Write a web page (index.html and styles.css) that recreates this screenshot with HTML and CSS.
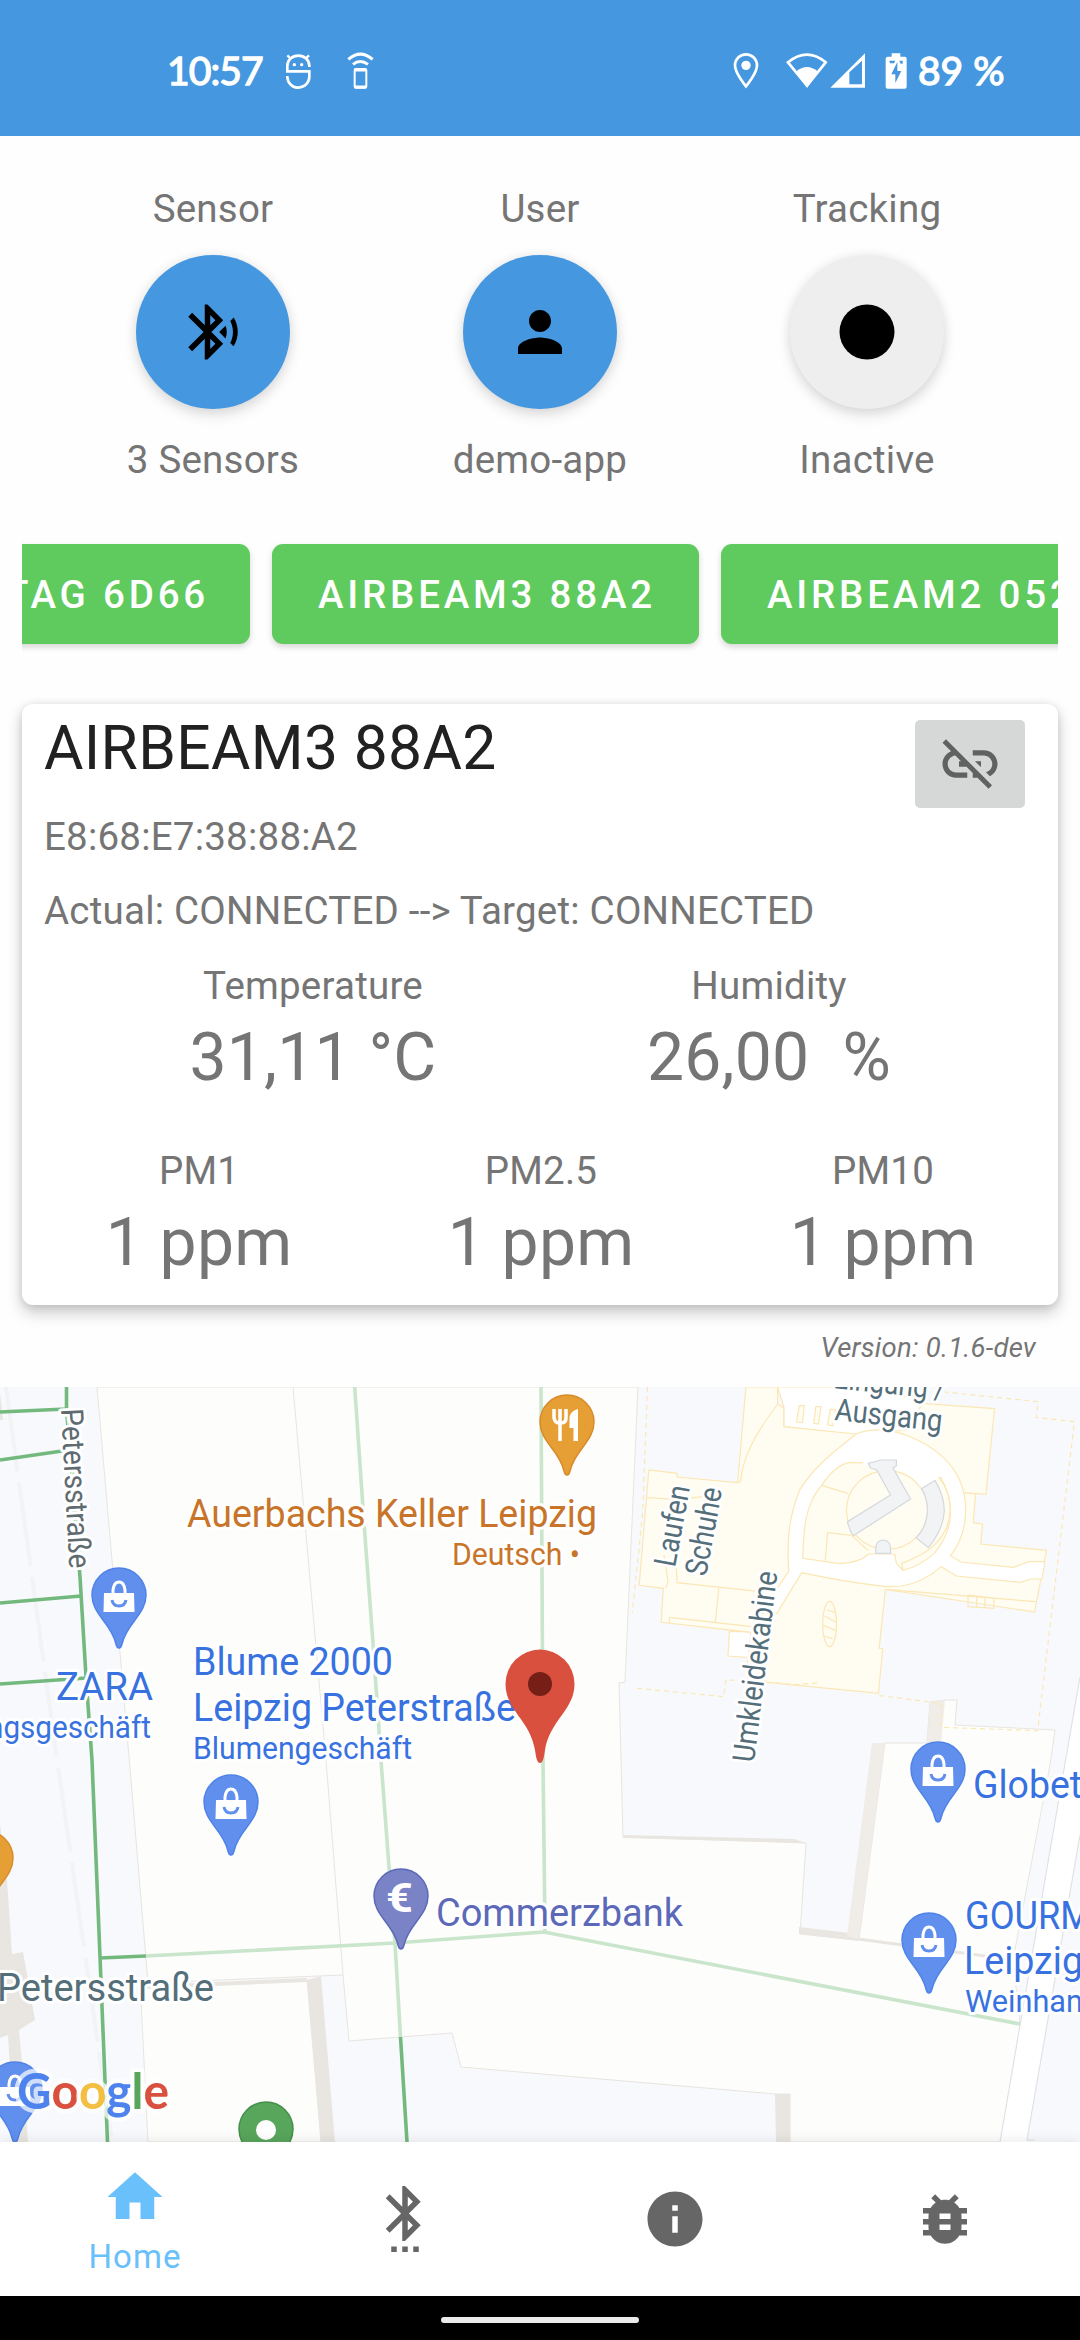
FILE: index.html
```html
<!DOCTYPE html>
<html lang="de">
<head>
<meta charset="utf-8">
<title>Home</title>
<link rel="stylesheet" href="styles.css">
</head>
<body>
<div class="app">
  <header class="status">
    <div class="status-left">
      <span class="clock">10:57</span>
      <svg class="st-icon robot" width="26" height="38" viewBox="106 36 78 114" fill="none" stroke="#fff" stroke-width="8">
        <path d="M113 46l8 8M178 46l-8 8" stroke-width="7"/>
        <path d="M179 81v-4a33 30 0 0 0-66 0v17h66v15a33 33 0 0 1-66 2v-3"/>
        <circle cx="134" cy="74" r="5" fill="#fff" stroke="none"/><circle cx="156" cy="74" r="5" fill="#fff" stroke="none"/>
      </svg>
      <svg class="st-icon" width="27" height="38" viewBox="288 36 81 114" fill="none" stroke="#fff">
        <path d="M292 58q36-31 73 0" stroke-width="9"/><path d="M306 73q22-17 45 0" stroke-width="9"/>
        <rect x="311" y="87" width="35" height="56" rx="4" stroke-width="6"/><path d="M310 90h36M310 141h36" stroke-width="9"/>
      </svg>
    </div>
    <div class="status-right">
      <svg class="st-icon" width="26" height="38" viewBox="99 36 78 114">
        <path d="M138 43a33 33 0 0 1 33 33c0 24-33 63-33 63s-33-39-33-63a33 33 0 0 1 33-33z" fill="none" stroke="#fff" stroke-width="8"/><circle cx="138" cy="76" r="14" fill="#fff"/>
      </svg>
      <svg class="st-icon wifi" width="42" height="38" viewBox="257 36 126 114">
        <path d="M263 67q57-46 113 0l-56 70z" fill="none" stroke="#fff" stroke-width="8"/><path d="M287 95q33-28 66 0l-33 48z" fill="#fff"/>
      </svg>
      <svg class="st-icon signal" width="36" height="38" viewBox="389 36 108 114">
        <path d="M390 143L494 40v103zM447 97v36h38V62z" fill="#fff" fill-rule="evenodd"/>
      </svg>
      <svg class="st-icon battery" width="22" height="38" viewBox="553 36 66 114">
        <path d="M573 40h26v10h13q6 0 6 6v84q0 6-6 6h-51q-6 0-6-6V56q0-6 6-6h12z" fill="#fff"/>
        <path d="M566 62h18l-4 8h-12zM596 62h10v9h-6zM590 66l-18 37h12v26l18-36h-12z" fill="#4597e0"/>
      </svg>
      <span class="percent">89 %</span>
    </div>
  </header>

  <section class="controls">
    <div class="control">
      <span class="label">Sensor</span>
      <button class="fab"><svg viewBox="0 0 24 24"><path d="M14.24 12.01l2.32 2.32c.28-.72.44-1.51.44-2.33 0-.82-.16-1.59-.43-2.31l-2.33 2.32zm5.29-5.3l-1.26 1.26c.63 1.21.98 2.57.98 4.02s-.36 2.82-.98 4.02l1.2 1.2c.97-1.54 1.54-3.36 1.54-5.31-.01-1.89-.55-3.67-1.48-5.19zm-3.82 1L10 2H9v7.59L4.41 5 3 6.41 8.59 12 3 17.59 4.41 19 9 14.41V22h1l5.71-5.71-4.3-4.29 4.3-4.29zM11 5.83l1.88 1.88L11 9.59V5.83zm1.88 10.46L11 18.17v-3.76l1.88 1.88z"/></svg></button>
      <span class="label">3 Sensors</span>
    </div>
    <div class="control">
      <span class="label">User</span>
      <button class="fab"><svg viewBox="0 0 24 24"><path d="M12 12c2.21 0 4-1.79 4-4s-1.79-4-4-4-4 1.79-4 4 1.79 4 4 4zm0 2c-2.67 0-8 1.34-8 4v2h16v-2c0-2.66-5.33-4-8-4z"/></svg></button>
      <span class="label">demo-app</span>
    </div>
    <div class="control">
      <span class="label">Tracking</span>
      <button class="fab fab-off"><svg viewBox="0 0 24 24"><circle cx="12" cy="12" r="10"/></svg></button>
      <span class="label">Inactive</span>
    </div>
  </section>

  <div class="chips">
    <button class="chip chip-first">TAG 6D66</button>
    <button class="chip chip-mid">AIRBEAM3 88A2</button>
    <button class="chip">AIRBEAM2 052</button>
  </div>

  <section class="card">
    <div class="card-head">
      <h1>AIRBEAM3 88A2</h1>
      <button class="unlink"><svg viewBox="0 0 24 24"><path d="M17 7h-4v1.9h4c1.71 0 3.1 1.39 3.1 3.1 0 1.43-.98 2.63-2.31 2.98l1.46 1.46C20.88 15.61 22 13.95 22 12c0-2.760-2.240-5-5-5zm-1 4h-2.190l2 2H16v-2zM2 4.270l3.110 3.110C3.290 8.120 2 9.910 2 12c0 2.760 2.240 5 5 5h4v-1.900H7c-1.710 0-3.100-1.390-3.100-3.100 0-1.590 1.210-2.900 2.760-3.070L8.730 11H8v2h2.730L13 15.270V17h1.730l4.010 4L20 19.740 3.270 3 2 4.270z"/></svg></button>
    </div>
    <p class="line">E8:68:E7:38:88:A2</p>
    <p class="line">Actual: CONNECTED --&gt; Target: CONNECTED</p>
    <div class="readings two">
      <div class="reading"><span class="label">Temperature</span><span class="value">31,11 °C</span></div>
      <div class="reading"><span class="label">Humidity</span><span class="value">26,00&nbsp; %</span></div>
    </div>
    <div class="readings three">
      <div class="reading"><span class="label">PM1</span><span class="value">1 ppm</span></div>
      <div class="reading"><span class="label">PM2.5</span><span class="value">1 ppm</span></div>
      <div class="reading"><span class="label">PM10</span><span class="value">1 ppm</span></div>
    </div>
  </section>
  <p class="version">Version: 0.1.6-dev</p>

  <section class="map">
    <svg class="map-svg" width="1080" height="755" viewBox="0 1387 1080 755">
      <defs>
        <path id="pin" d="M0 0C-2 0-2.500-2-3-4C-5-13-9-19-16-28C-22-36-27-43-27-53A27 27 0 0 1 27-53C27-43 22-36 16-28C9-19 5-13 3-4C2.500-2 2 0 0 0Z"/>
        <g id="shop">
          <use href="#pin" fill="#608fed" stroke="#5083e8" stroke-width="1.500"/>
          <path d="M-15-55H15L15.500-36H-15.500Z" fill="#fff"/>
          <path d="M-6-54V-58Q-5-66 0-66Q5-66 6-58V-54" fill="none" stroke="#fff" stroke-width="3"/>
          <path d="M-7-48Q-6-42 0-42Q6-42 7-48" fill="none" stroke="#608fed" stroke-width="3"/>
        </g>
      </defs>
      <rect y="1387" width="1080" height="755" fill="#f8f9fc"/>
      <path class="lane" d="M6 1387L57 1760L87 1968L112 2142"/>

      <!-- buildings -->
      <g class="building">
        <path d="M97 1387L131 1780L148 1983L343 1975L349 2041L452 2033L461 2067L775 2094H790V2142H1001L1005 2115H1018L1020 2023L1013 1960L1050 1765L1055 1730L955 1725L957 1700H945L930 1702L927 1743H885L859 1940L800 1934L806 1843L623 1837L619 1683L625 1682L638 1387Z"/>
        <path d="M146 1987L307 1980L321 2142H148L141 2000Z"/>
        <path d="M293 1387L326 1760L343 1975" fill="none"/>
      </g>
      <path class="block" d="M0 1824L7 1880L12 1954L23 1952L35 2020L19 2030L22 2062L28 2142H14L8 2035L0 2038Z"/>
      <path class="block" d="M0 1392L3 1420H0Z"/>
      <path class="block" d="M307 1980L321 1976L335 2142H321Z"/>
      <path class="block" d="M146 1985L307 1978V1982L146 1989ZM623 1835L794 1839L806 1843L623 1838Z"/>
      <path class="block" d="M775 2094H790V2142H776ZM799 1927L858 1934V1941L799 1934Z"/>
      <path class="block light" d="M872 1743L885 1743L859 1939L847 1936ZM930 1702L945 1700L941 1745L927 1743Z"/>
      <path d="M858 1939L1000 1958" stroke="#e9e5e0" stroke-width="3"/>
      <path d="M1080 1677V1835L1027 2142H1000Z" fill="#fff"/>
      <path d="M1080 1677L1063 1775L1000 2142M1080 1835L1027 2140H1034" fill="none" stroke="#e0e2e6" stroke-width="1.200"/>

      <!-- shopping centre floor plan -->
      <g class="indoor" transform="matrix(.34436 0 0 .33333 540 1380)">
        <path class="plain" d="M690 21H900L1110 60L1130 180L920 165L708 140V80ZM550 755H640V835L546 828Z"/>
        <path d="M598 21H690V72L708 84V140L918 162L1070 150L1110 70L1320 86L1295 343L1232 338L1265 342L1258 428L1285 432L1280 492L1471 511L1436 696L1003 628L985 805L995 806L983 940L660 907L600 870L612 757L352 727L358 625L288 616L316 270L398 280V291L574 308Z"/>
        <path class="plain" d="M918 162Q985 135 1070 168C1180 215 1236 290 1236 390Q1236 470 1192 527L1222 546L1375 562L1420 545H1466L1458 597H1425L1395 607L1210 588L1165 560Q1110 610 1050 618L1005 620Q880 605 760 578L688 700H640L722 575C718 500 718 420 755 328C800 255 860 210 918 162Z"/>
        <path d="M905 247C990 250 1130 265 1165 294C1210 380 1195 460 1145 520Q1100 560 1054 571L1035 550L1030 522H955Q925 550 868 551L763 535C765 450 770 370 818 316Q860 250 905 247Z"/>
        <path class="plain no" d="M935 255L1030 248L1035 270Q1080 285 1108 326L1150 300L1180 270L1080 200L960 210Z"/>
        <ellipse cx="1008" cy="390" rx="118" ry="118"/>
        <path d="M690 72C620 170 590 230 582 305L574 308M818 316L895 341M828 546L835 458L905 466L953 512M1054 571L1050 550Q1190 500 1192 385Q1190 330 1158 292M310 353L395 358L475 350M360 525L372 605L365 625M395 545L398 608L640 635M519 625L509 727M376 712L615 740M376 712V730M1003 628L1440 665M1243 645V680L1318 685V654L1243 645M1268 650V682M1292 652V684" fill="none"/>
        <ellipse cx="841" cy="732" rx="20" ry="68"/>
        <path d="M833 690L858 697M826 708L860 727M822 735L858 752M824 768L850 776" fill="none"/>
        <path class="stairs" d="M953 250L990 240H1035V258L1025 264L1076 357L910 467Q897 450 893 425L1018 345L978 270L960 264ZM1108 326L1147 301Q1175 350 1174 395Q1170 450 1128 503L1092 473Q1125 440 1125 385Q1123 350 1108 326ZM975 520V500Q980 480 997 480Q1015 482 1018 502V520Z"/>
        <path d="M745 126L753 77H768L762 128ZM795 130L801 80H816L809 132ZM835 134L843 88H858L850 138Z"/>
        <path class="dash" d="M312 21L298 400L268 700M282 925L533 950L540 898L590 905M660 907L745 914L815 908M985 947L1135 966L1165 970L1163 1042L1445 1052L1552 125L1441 112L1446 65L1175 36"/>
      </g>

      <!-- walkways -->
      <g fill="none" stroke-width="3.600">
        <path stroke="#73b97e" d="M66.500 1387V1409L80 1577L86 1677L92 1760L100 1957L107.500 2142M0 1412L66 1409M0 1460L69 1450M0 1603L81 1596M0 1684L86 1678M100 1958L146 1956M400.500 2037L407 2142"/>
        <path stroke="#c9e5cc" d="M354.700 1387L364 1523L373 1643L381.500 1767L389 1867L395 1943L400.500 2037M146 1956L395 1943L544 1932L1020 2024M541 1387L543 1760L545 1932M68 1415L80 1568"/>
      </g>

      <!-- markers -->
      <use href="#shop" x="119" y="1648"/>
      <use href="#shop" x="231" y="1855"/>
      <use href="#shop" x="938" y="1822"/>
      <use href="#shop" x="929" y="1993"/>
      <use href="#shop" x="15" y="2142"/>
      <use href="#pin" x="-14" y="1911" fill="#e69f35" stroke="#d98a2b" stroke-width="1.500"/>
      <use href="#pin" x="567" y="1475" fill="#e69f35" stroke="#d98a2b" stroke-width="1.500"/>
      <path d="M554 1409v9q1 5 5 5h2q5 0 5-5v-9M560 1409v32" fill="none" stroke="#fff" stroke-width="3.500"/>
      <path d="M578 1409v32h-4.500v-13h-4v-11q1-6 8.500-8z" fill="#fff"/>
      <use href="#pin" x="401" y="1949" fill="#7983c6" stroke="#5c68b8" stroke-width="1.500"/>
      <text class="euro" x="386" y="1912" textLength="27" lengthAdjust="spacingAndGlyphs">€</text>
      <use href="#pin" x="266" y="2182" fill="#58a55c" stroke="#43904a" stroke-width="1.500"/>
      <circle cx="266" cy="2130" r="10" fill="#fff"/>

      <!-- labels -->
      <g class="poi">
        <g class="orange"><text x="187" y="1526.500" textLength="410" lengthAdjust="spacingAndGlyphs">Auerbachs Keller Leipzig</text>
        <text class="sub" x="452" y="1565" textLength="128" lengthAdjust="spacingAndGlyphs">Deutsch •</text></g>
        <g class="blue">
          <text x="193" y="1675" textLength="200" lengthAdjust="spacingAndGlyphs">Blume 2000</text>
          <text x="193" y="1720.500" textLength="323" lengthAdjust="spacingAndGlyphs">Leipzig Peterstraße</text>
          <text class="sub" x="193" y="1758.500" textLength="219" lengthAdjust="spacingAndGlyphs">Blumengeschäft</text>
          <text x="56" y="1700" textLength="97" lengthAdjust="spacingAndGlyphs">ZARA</text>
          <text class="sub" x="-13" y="1738" textLength="164" lengthAdjust="spacingAndGlyphs">ngsgeschäft</text>
          <text x="973" y="1798" textLength="109" lengthAdjust="spacingAndGlyphs">Globet</text>
          <text x="965" y="1929" textLength="127" lengthAdjust="spacingAndGlyphs">GOURM</text>
          <text x="964" y="1974" textLength="119" lengthAdjust="spacingAndGlyphs">Leipzig</text>
          <text class="sub" x="965" y="2012" textLength="118" lengthAdjust="spacingAndGlyphs">Weinhan</text>
        </g>
        <text class="violet" x="436" y="1925.500" textLength="247" lengthAdjust="spacingAndGlyphs">Commerzbank</text>
        <text class="slate" x="-3" y="2000.500" textLength="217" lengthAdjust="spacingAndGlyphs">Petersstraße</text>
        <g class="slate small">
          <text class="grey" transform="translate(61 1409) rotate(87)" textLength="160" lengthAdjust="spacingAndGlyphs">Petersstraße</text>
          <text transform="translate(833 1388) rotate(6)" textLength="112" lengthAdjust="spacingAndGlyphs">Eingang /</text>
          <text transform="translate(834 1420) rotate(6)" textLength="108" lengthAdjust="spacingAndGlyphs">Ausgang</text>
          <text transform="translate(675 1568) rotate(-79.500)" textLength="82" lengthAdjust="spacingAndGlyphs">Laufen</text>
          <text transform="translate(706 1577) rotate(-79.500)" textLength="89" lengthAdjust="spacingAndGlyphs">Schuhe</text>
          <text transform="translate(754 1763) rotate(-83)" textLength="192" lengthAdjust="spacingAndGlyphs">Umkleidekabine</text>
        </g>
      </g>

      <!-- current location -->
      <path d="M540 1763C537 1763 536 1757 535 1750C530 1720 505.500 1710 505.500 1684A34.500 34.500 0 0 1 574.500 1684C574.500 1710 550 1720 545 1750C544 1757 543 1763 540 1763Z" fill="#d9503f"/>
      <circle cx="540" cy="1684" r="12" fill="#751f17"/>
      <text class="logo" x="17" y="2109" textLength="152" lengthAdjust="spacingAndGlyphs"><tspan fill="#4e83ee">G</tspan><tspan fill="#d9503f">o</tspan><tspan fill="#f2bf42">o</tspan><tspan fill="#4e83ee">g</tspan><tspan fill="#58a55c">l</tspan><tspan fill="#d9503f">e</tspan></text>
    </svg>
  </section>

  <nav class="tabs">
    <a class="tab tab-on"><svg viewBox="0 0 24 24"><path d="M10 20v-6h4v6h5v-8h3L12 3 2 12h3v8z"/></svg><span>Home</span></a>
    <a class="tab"><svg viewBox="0 0 24 24"><path d="M11 24h2v-2h-2v2zm-4 0h2v-2H7v2zm8 0h2v-2h-2v2zm2.710-18.290L12 0h-1v7.590L6.410 3 5 4.410 10.590 10 5 15.590 6.410 17 11 12.410V20h1l5.710-5.710-4.300-4.290 4.300-4.290zM13 3.830l1.880 1.880L13 7.590V3.830zm1.880 10.460L13 16.170v-3.760l1.880 1.880z"/></svg></a>
    <a class="tab"><svg viewBox="0 0 24 24"><path d="M12 2C6.480 2 2 6.480 2 12s4.480 10 10 10 10-4.480 10-10S17.520 2 12 2zm1 15h-2v-6h2v6zm0-8h-2V7h2v2z"/></svg></a>
    <a class="tab"><svg viewBox="0 0 24 24"><path d="M20 8h-2.810c-.45-.78-1.070-1.450-1.820-1.960L17 4.410 15.590 3l-2.170 2.170C12.960 5.060 12.490 5 12 5c-.49 0-.96.06-1.410.17L8.410 3 7 4.410l1.620 1.630C7.880 6.550 7.260 7.220 6.810 8H4v2h2.090c-.05.33-.09.66-.09 1v1H4v2h2v1c0 .34.04.67.09 1H4v2h2.810c1.040 1.790 2.970 3 5.190 3s4.150-1.210 5.190-3H20v-2h-2.090c.05-.33.09-.66.09-1v-1h2v-2h-2v-1c0-.34-.04-.67-.09-1H20V8zm-6 8h-4v-2h4v2zm0-4h-4v-2h4v2z"/></svg></a>
  </nav>
  <div class="gesture"><div class="handle"></div></div>
</div>
</body>
</html>
```
FILE: styles.css
```css
* { box-sizing: border-box; }
body { margin: 0; background: #fefefe; font-family: Roboto, "Liberation Sans", sans-serif; color: #757575; font-size: 38.5px; line-height: 52px; letter-spacing: 0.22px; }
p, h1 { margin: 0; }
button { border: 0; padding: 0; font: inherit; display: flex; align-items: center; justify-content: center; flex: none; }
svg { display: block; flex: none; }
.app { width: 1080px; height: 2340px; display: flex; flex-direction: column; overflow: hidden; }

.status { height: 136px; flex: none; background: #4597e0; color: #fff; display: flex; justify-content: space-between; padding: 52px 75px 0 167px; font-family: Lato, Roboto, sans-serif; font-weight: 400; font-size: 39px; line-height: 37px; -webkit-text-stroke: 1.3px #fff; }
.status-left, .status-right { display: flex; height: 38px; }
.clock { width: 95px; margin-right: 23px; white-space: nowrap; letter-spacing: -0.9px; }
.robot { margin-right: 36px; }
.wifi { margin-left: 27px; }
.signal { margin-left: 2px; }
.battery { margin-left: 19px; }
.percent { margin-left: 11px; width: 87px; white-space: nowrap; letter-spacing: 0; }

.controls { display: flex; padding: 47px 49.5px 0; height: 402px; flex: none; }
.control { flex: 1; display: flex; flex-direction: column; align-items: center; }
.fab { width: 154px; height: 154px; border-radius: 50%; background: #4597e0; margin: 20px 0 25px; box-shadow: 0 6px 14px rgba(0,0,0,.13), 0 0 12px rgba(0,0,0,.06); }
.fab-off { background: #eee; }
.fab svg, .unlink svg, .tab svg { width: 66px; height: 66px; fill: #000; }

.chips { margin: 0 22px; height: 122px; flex: none; padding-top: 6px; display: flex; gap: 22px; overflow: hidden; }
.chip { height: 100px; background: #5fca5d; color: #fff; border-radius: 11px; padding: 2px 44px 0 46px; font-weight: 500; letter-spacing: 3.8px; justify-content: flex-start; white-space: nowrap; box-shadow: 0 3px 6px rgba(0,0,0,.16); }
.chip-first { width: 400px; margin-left: -172px; justify-content: flex-end; padding-right: 41px; }
.chip-mid { width: 427px; }

.card { margin: 44px 22px 0; height: 601px; flex: none; background: #fff; border-radius: 11px; padding: 8px 4px 0 6px; box-shadow: 0 8px 16px rgba(0,0,0,.2), 0 1px 8px rgba(0,0,0,.12); }
.card-head { display: flex; justify-content: space-between; height: 99px; padding: 0 29px 0 16px; }
h1 { font-size: 60.5px; line-height: 74px; font-weight: 400; color: #212121; letter-spacing: 0.35px; }
.unlink { width: 110px; height: 88px; margin-top: 8px; border-radius: 5px; background: #d6d7d7; }
.unlink svg { fill: #606261; }
.line { padding-left: 16px; height: 74.500px; }
.line + .line { height: 74px; margin-top: -1px; margin-bottom: 1px; }
.readings { display: grid; }
.two { grid-template-columns: 456px 456px; justify-content: center; }
.three { grid-template-columns: repeat(3, 1fr); margin-top: 47px; }
.reading { display: flex; flex-direction: column; align-items: center; }
.value { font-size: 66px; line-height: 80px; margin-top: 6px; white-space: pre; }
.version { margin: 25px 44px 0 0; height: 57px; flex: none; text-align: right; font-size: 27.5px; line-height: 36px; font-style: italic; }

.map { height: 755px; flex: none; overflow: hidden; letter-spacing: 0; }
.lane { fill: none; stroke: #f1f3f5; stroke-width: 4; stroke-dasharray: 85 11; }
.building path { fill: #fdfdfb; stroke: #e8e5df; stroke-width: 1; }
.building path[fill="none"] { fill: none; }
.block { fill: #e9e6e1; }
.light { fill: #f0ede9; }
.indoor path, .indoor ellipse { fill: #fffcf1; stroke: #fbe7b5; stroke-width: 1.2; vector-effect: non-scaling-stroke; }
.indoor path[fill="none"] { fill: none; }
.indoor .plain { fill: #fff; }
.indoor .no { stroke: none; }
.indoor .stairs { fill: #f1f3f5; stroke: #d5d9de; }
.indoor .dash { fill: none; stroke-dasharray: 5 4; }
.poi text { font-size: 39px; paint-order: stroke; stroke: #fff; stroke-width: 6px; stroke-linejoin: round; }
.poi .sub { font-size: 32px; }
.poi .small text { font-size: 31px; }
.orange { fill: #c87429; }
.blue { fill: #3871e0; }
.violet { fill: #5c68b8; }
.slate { fill: #546e7a; }
.slate .grey { fill: #5f6b70; }
.euro { font: 700 40px Roboto, sans-serif; fill: #fff; }
.logo { font: 700 50px Lato, sans-serif; paint-order: stroke; stroke: rgba(255,255,255,.7); stroke-width: 9px; stroke-linejoin: round; }

.tabs { height: 154px; flex: none; background: #fff; display: flex; position: relative; box-shadow: 0 -2px 12px rgba(0,0,0,.08); }
.tab { flex: 1; display: flex; flex-direction: column; align-items: center; padding-top: 44px; }
.tab svg { fill: #666; }
.tab-on { padding-top: 22px; color: #69c0fa; }
.tab-on svg { fill: #69c0fa; }
.tab span { font-size: 33px; line-height: 40px; margin-top: 7px; letter-spacing: 1.1px; }
.gesture { height: 44px; flex: none; background: #000; display: flex; justify-content: center; padding-top: 21px; }
.handle { width: 198px; height: 6px; border-radius: 3px; background: #ebebeb; }
```
